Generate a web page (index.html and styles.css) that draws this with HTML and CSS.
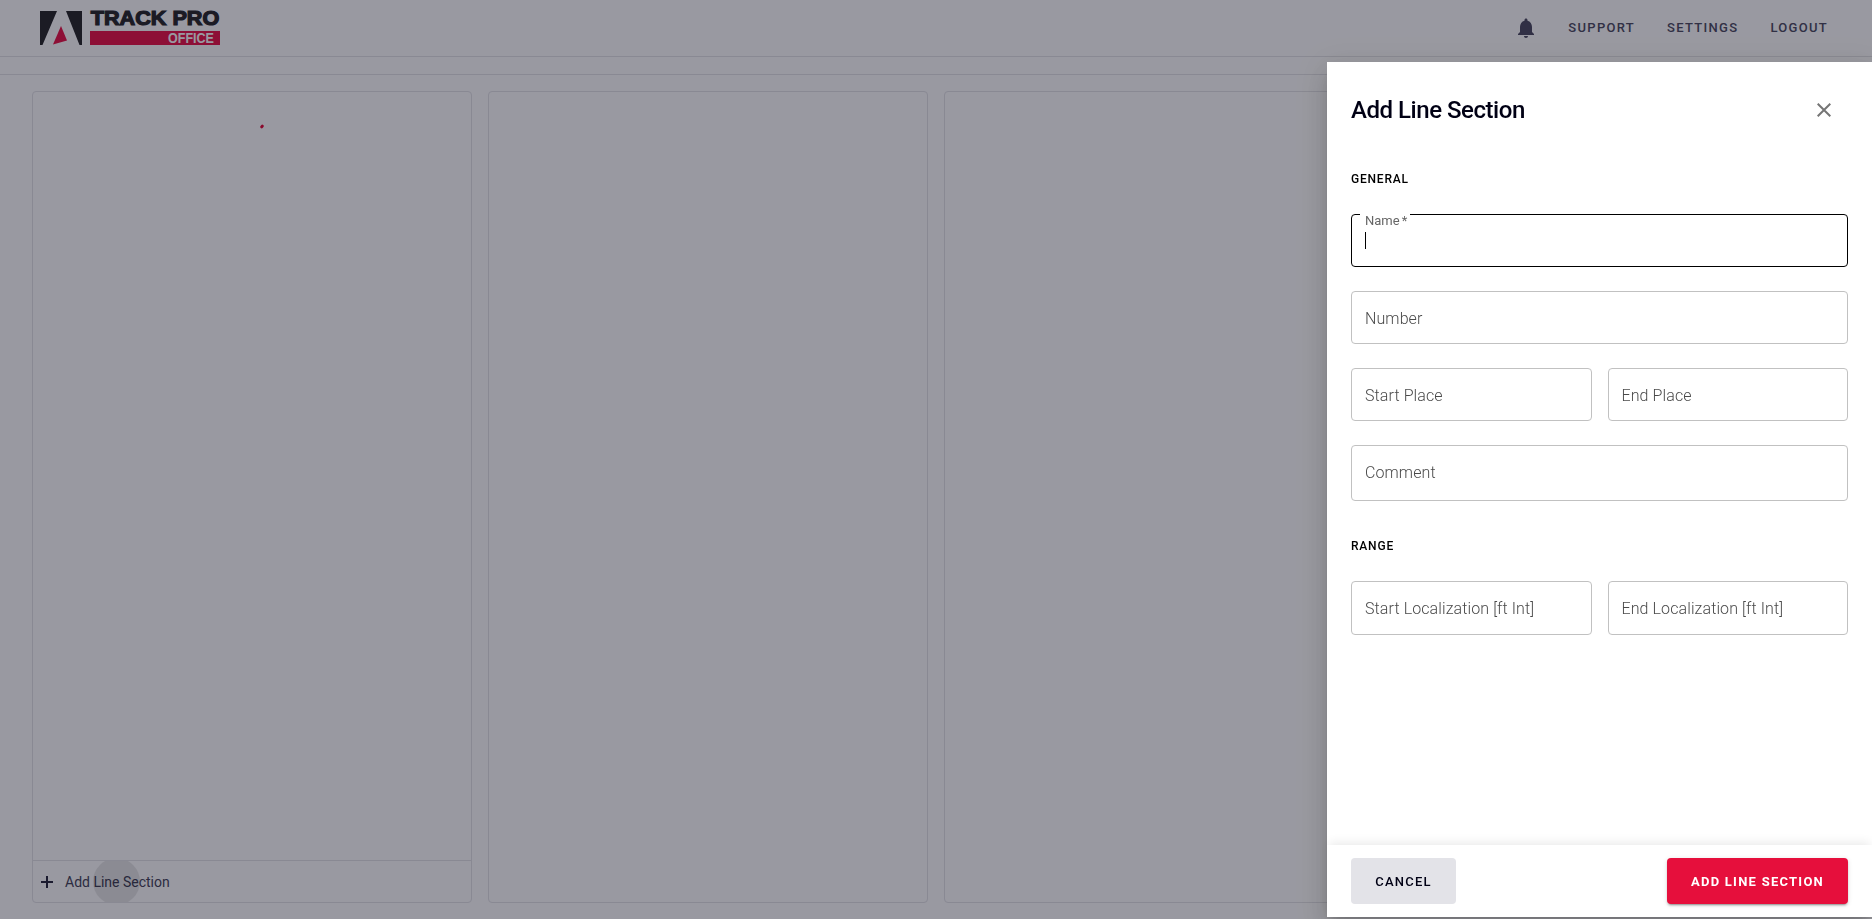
FILE: index.html
```html
<!DOCTYPE html>
<html lang="en">
<head>
<meta charset="utf-8">
<title>Track Pro Office</title>
<link rel="stylesheet" href="styles.css">
</head>
<body>
<div class="app">
  <header class="topbar">
    <svg class="logo" width="182" height="36" viewBox="0 0 182 36" role="img" aria-label="Track Pro Office">
      <path d="M0 0H17L2.5 34H0ZM26 0H42V34H39.5Z" fill="#2d2d30"/>
      <path d="M21 15L27 29.5L13 33.5Z" fill="#ec1a4d"/>
      <rect x="50" y="20" width="130" height="14" fill="#ec1a4d"/>
      <text class="logo-name" x="50.7" y="14.4" textLength="128.600" lengthAdjust="spacingAndGlyphs">TRACK PRO</text>
      <text class="logo-sub" x="128" y="31.7" textLength="46" lengthAdjust="spacingAndGlyphs">OFFICE</text>
    </svg>
    <nav class="nav">
      <svg class="bell" width="24" height="24" viewBox="0 0 24 24"><path d="M12 22c1.1 0 2-.9 2-2h-4c0 1.1.89 2 2 2zm6-6v-5c0-3.070-1.640-5.640-4.500-6.320V4c0-.83-.67-1.500-1.500-1.500s-1.500.67-1.500 1.500v.68C7.630 5.360 6 7.920 6 11v5l-2 2v1h16v-1l-2-2z"/></svg>
      <a class="nav-link">SUPPORT</a>
      <a class="nav-link">SETTINGS</a>
      <a class="nav-link">LOGOUT</a>
    </nav>
  </header>
  <div class="subbar"></div>
  <main class="columns">
    <section class="column">
      <div class="column-body"><span class="spinner"></span></div>
      <button class="add-row">
        <span class="ripple"></span>
        <svg class="plus" width="12" height="12" viewBox="0 0 12 12"><path d="M6 0V12M0 6H12"/></svg>
        <span class="add-text">Add Line Section</span>
      </button>
    </section>
    <section class="column"></section>
    <section class="column"></section>
    <section class="column"></section>
  </main>
</div>
<div class="backdrop">
  <div class="drawer" role="dialog">
    <div class="drawer-head">
      <h1 class="title">Add Line Section</h1>
      <svg class="close" width="14" height="14" viewBox="0 0 14 14"><path d="M.7 .7L13.300 13.300M13.300 .7L.7 13.300"/></svg>
    </div>
    <div class="drawer-body">
      <h2 class="group">GENERAL</h2>
      <div class="fields">
        <div class="field focused"><span class="float-label">Name *</span><span class="caret"></span></div>
        <div class="field">Number</div>
        <div class="pair">
          <div class="field">Start Place</div>
          <div class="field">End Place</div>
        </div>
        <div class="field area">Comment</div>
      </div>
      <h2 class="group range">RANGE</h2>
      <div class="fields">
        <div class="pair">
          <div class="field tall">Start Localization [ft Int]</div>
          <div class="field tall">End Localization [ft Int]</div>
        </div>
      </div>
    </div>
    <footer class="drawer-foot">
      <button class="btn cancel">CANCEL</button>
      <button class="btn submit">ADD LINE SECTION</button>
    </footer>
  </div>
</div>
</body>
</html>
```

FILE: styles.css
```css
* { box-sizing: border-box; }
body { margin: 0; font-family: Roboto, sans-serif; background: #fff; overflow: hidden; }
button { font-family: inherit; border: 0; margin: 0; }

.app { height: 919px; display: flex; flex-direction: column; }
.topbar { height: 57px; flex: none; border-bottom: 1px solid #e4e4e8; display: flex; align-items: flex-start; justify-content: space-between; padding: 11px 44px 0 40px; }
.logo { display: block; overflow: visible; }
.logo-name { font: bold 20px "Liberation Sans", sans-serif; fill: #2d2d30; stroke: #2d2d30; stroke-width: 1.2px; }
.logo-sub { font: bold 14px "Liberation Sans", sans-serif; fill: #fff; }
.nav { display: flex; align-items: center; height: 34px; }
.bell { fill: #525166; margin-right: 30px; }
.nav-link { font-size: 13px; font-weight: 500; letter-spacing: 1.3px; color: #525166; line-height: 16px; margin-right: 32px; }
.nav-link:last-child { margin-right: 0; }
.subbar { height: 18px; flex: none; border-bottom: 1px solid #e4e4e8; }

.columns { flex: 1; display: grid; grid-template-columns: repeat(4, 1fr); gap: 16px; padding: 16px 32px; }
.column { border: 1px solid #e4e4e8; border-radius: 4px; display: flex; flex-direction: column; }
.column-body { flex: 1; display: flex; justify-content: center; padding: 33px 0 0 19px; }
.spinner { width: 4px; height: 3px; border-radius: 2px; background: #e60f3c; transform: rotate(-50deg); }
.add-row { position: relative; overflow: hidden; height: 42px; border-top: 1px solid #e4e4e8; background: none; display: flex; align-items: center; padding: 1px 8px 0; gap: 12px; }
.plus { stroke: #2e2d42; stroke-width: 2; fill: none; }
.add-text { font-size: 14px; color: #4a495e; }
.ripple { position: absolute; left: 60px; top: -3px; width: 47px; height: 47px; border-radius: 50%; background: rgba(0, 0, 0, .09); }

.backdrop { position: fixed; inset: 0; background: rgba(0, 0, 20, .4); display: flex; justify-content: flex-end; padding: 62px 0 2px; }
.drawer { width: 545px; background: #fff; display: flex; flex-direction: column; box-shadow: 0 8px 10px -5px rgba(0, 0, 0, .16), 0 16px 24px 2px rgba(0, 0, 0, .1), 0 6px 30px 5px rgba(0, 0, 0, .08); }
.drawer-head { display: flex; justify-content: space-between; align-items: center; height: 96px; padding: 0 41px 0 24px; }
.title { margin: 0; font-size: 24px; font-weight: 500; letter-spacing: -.46px; color: #000014; }
.close { stroke: #757575; stroke-width: 2; }
.drawer-body { flex: 1; padding: 13px 24px 0; }
.group { margin: 0 0 26px; font-size: 12px; line-height: 17px; font-weight: 500; letter-spacing: .8px; color: #000; }
.group.range { margin-top: 37px; }
.fields { display: flex; flex-direction: column; gap: 24px; }
.pair { display: grid; grid-template-columns: 1fr 1fr; gap: 16px; }
.field { position: relative; height: 53px; border: 1px solid #c1c1c1; border-radius: 4px; padding: 0 13px; font-size: 16px; font-weight: 300; letter-spacing: .1px; line-height: 53px; color: #4a4a4a; }
.field.area { height: 56px; }
.field.tall { height: 54px; }
.field.focused { border-color: #000; }
.float-label { position: absolute; left: 8px; top: -1px; width: 50px; padding-left: 5px; background: #fff; font-size: 13px; font-weight: 400; letter-spacing: 0; word-spacing: -1px; line-height: 14px; color: #666; white-space: nowrap; }
.caret { position: absolute; left: 13px; top: 17px; width: 1px; height: 17px; background: #000; }
.drawer-foot { height: 72px; display: flex; justify-content: space-between; align-items: center; padding: 0 24px; box-shadow: 0 -4px 10px -2px rgba(0, 0, 0, .09); }
.btn { height: 46px; border-radius: 4px; font-size: 13px; letter-spacing: 1.25px; padding: 0; }
.cancel { width: 105px; background: #e3e3e8; color: #000014; font-weight: 500; }
.submit { width: 181px; background: #e60f3c; color: #fff; font-weight: 700; box-shadow: 0 3px 1px -2px rgba(0, 0, 0, .2), 0 2px 2px rgba(0, 0, 0, .14), 0 1px 5px rgba(0, 0, 0, .12); }
```
